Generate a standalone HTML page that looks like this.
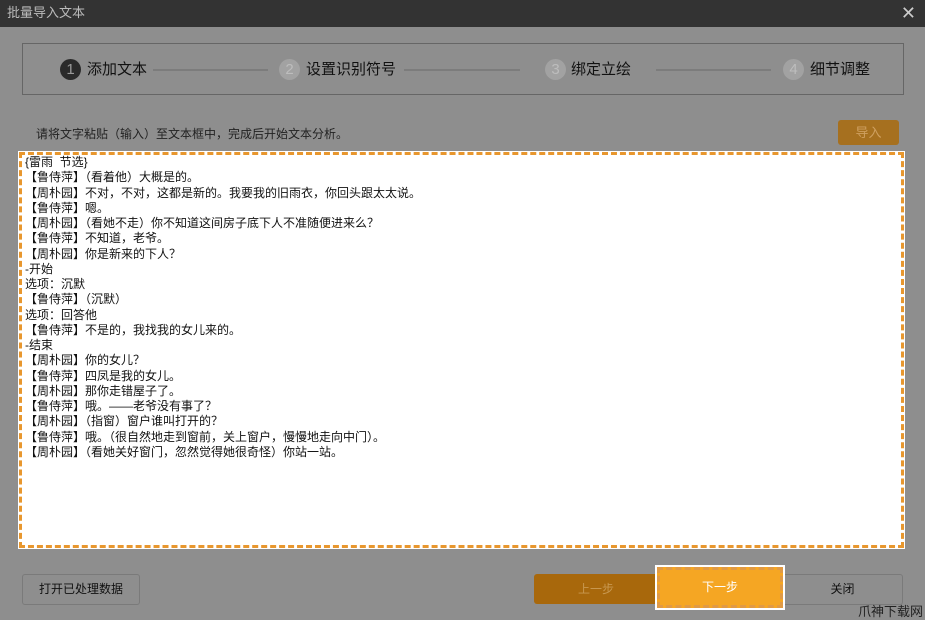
<!DOCTYPE html><html><head><meta charset="utf-8"><style>
*{margin:0;padding:0;box-sizing:border-box}
html,body{width:925px;height:620px;overflow:hidden}
body{background:#8e8e8e;font-family:"Liberation Sans","Noto Sans CJK SC",sans-serif;position:relative}
.a{position:absolute}
.title{left:0;top:0;width:925px;height:27px;background:#333;color:#bbb;font-size:13px;line-height:26px;padding-left:7px}
.steps{left:22px;top:43px;width:882px;height:52px;border:1px solid #666}
.circ{width:21px;height:21px;border-radius:50%;font-size:15px;line-height:21px;text-align:center;color:#bdbdbd;background:#a2a2a2}
.st{font-size:15px;color:#111;line-height:20px}
.ln{height:2px;background:#7c7c7c}
.ta{left:19px;top:152px;width:885px;height:396px;background:#fff;border:3px dashed #e8972e;outline:1px solid #fff;padding:0 3px;font-size:12px;color:#111;white-space:pre}
.ta div{height:15.26px;line-height:15.26px;overflow:visible}
.btn{font-size:12px;text-align:center;border-radius:3px}
</style></head><body>
<div class="a title">批量导入文本</div>
<div class="a" style="right:9px;top:3px;color:#ccc;font-size:18px">✕</div>
<div class="a steps"></div>
<div class="a circ" style="left:60px;top:59px;background:#2a2a2a;color:#999">1</div>
<div class="a st" style="left:87px;top:60px">添加文本</div>
<div class="a ln" style="left:153px;top:69px;width:115px"></div>
<div class="a circ" style="left:279px;top:59px">2</div>
<div class="a st" style="left:306px;top:60px">设置识别符号</div>
<div class="a ln" style="left:404px;top:69px;width:116px"></div>
<div class="a circ" style="left:545px;top:59px">3</div>
<div class="a st" style="left:571px;top:60px">绑定立绘</div>
<div class="a ln" style="left:656px;top:69px;width:115px"></div>
<div class="a circ" style="left:783px;top:59px">4</div>
<div class="a st" style="left:810px;top:60px">细节调整</div>
<div class="a" style="left:36px;top:125px;font-size:12px;color:#222">请将文字粘贴（输入）至文本框中，完成后开始文本分析。</div>
<div class="a btn" style="left:838px;top:120px;width:61px;height:25px;background:#a6701f;color:#cfa060;line-height:25px;font-size:13px">导入</div>
<div class="a ta"><div>{雷雨  节选}</div><div>【鲁侍萍】（看着他）大概是的。</div><div>【周朴园】不对，不对，这都是新的。我要我的旧雨衣，你回头跟太太说。</div><div>【鲁侍萍】嗯。</div><div>【周朴园】（看她不走）你不知道这间房子底下人不准随便进来么？</div><div>【鲁侍萍】不知道，老爷。</div><div>【周朴园】你是新来的下人？</div><div>-开始</div><div>选项：沉默</div><div>【鲁侍萍】（沉默）</div><div>选项：回答他</div><div>【鲁侍萍】不是的，我找我的女儿来的。</div><div>-结束</div><div>【周朴园】你的女儿？</div><div>【鲁侍萍】四凤是我的女儿。</div><div>【周朴园】那你走错屋子了。</div><div>【鲁侍萍】哦。——老爷没有事了？</div><div>【周朴园】（指窗）窗户谁叫打开的？</div><div>【鲁侍萍】哦。（很自然地走到窗前，关上窗户，慢慢地走向中门）。</div><div>【周朴园】（看她关好窗门，忽然觉得她很奇怪）你站一站。</div></div>
<div class="a btn" style="left:22px;top:574px;width:118px;height:31px;border:1px solid #7a7a7a;line-height:29px;color:#111">打开已处理数据</div>
<div class="a btn" style="left:534px;top:574px;width:124px;height:30px;background:#a8680c;line-height:30px;color:#c89850">上一步</div>
<div class="a btn" style="left:782px;top:574px;width:121px;height:31px;border:1px solid #7a7a7a;line-height:29px;color:#111">关闭</div>
<div class="a" style="left:655px;top:565px;width:130px;height:45px;background:#fff;padding:2px">
<div style="width:100%;height:100%;border:3px dashed #e09a45;background:#f5a623;color:#fff;font-size:12px;text-align:center;line-height:35px">下一步</div></div>
<div class="a" style="left:858px;top:603px;font-size:13px;color:#222;line-height:17px;white-space:nowrap">爪神下载网</div>
</body></html>
